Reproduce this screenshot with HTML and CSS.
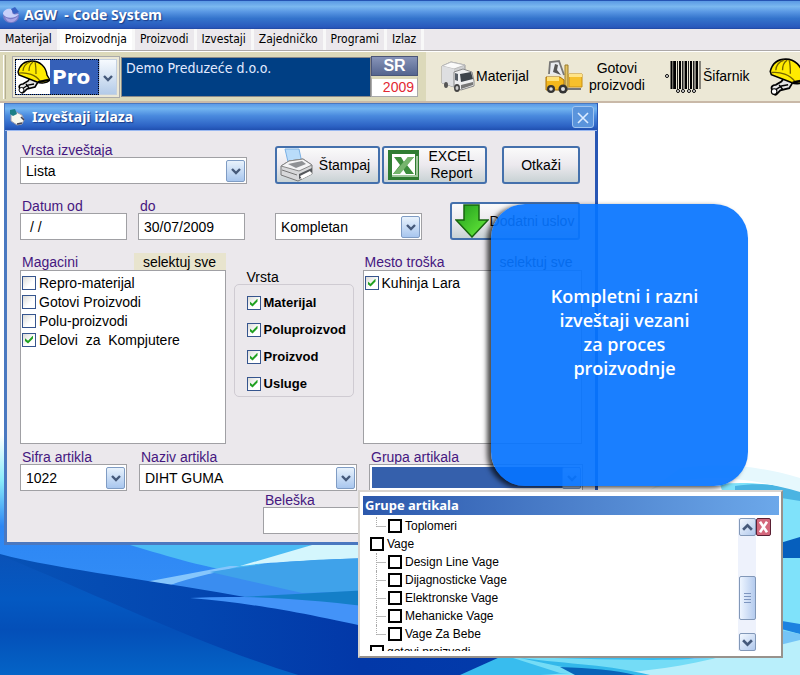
FILE: index.html
```html
<!DOCTYPE html>
<html lang="sr">
<head>
<meta charset="utf-8">
<title>AGW - Code System</title>
<link rel="stylesheet" href="styles.css">
</head>
<body>
<svg class="defs" aria-hidden="true">
  <defs>
    <linearGradient id="sky" x1="0" y1="0" x2="0" y2="1"><stop offset="0" stop-color="#fff"/><stop offset=".58" stop-color="#fff"/><stop offset=".66" stop-color="#8aecfa"/><stop offset=".74" stop-color="#2c86f4"/><stop offset=".85" stop-color="#338df6"/><stop offset="1" stop-color="#2a86f0"/></linearGradient>
    <linearGradient id="sea" x1="0" y1="0" x2="0" y2="1"><stop offset="0" stop-color="#0a52b8"/><stop offset=".35" stop-color="#0459c2"/><stop offset=".6" stop-color="#044fb8"/><stop offset="1" stop-color="#0466c8"/></linearGradient>
    <linearGradient id="deep" x1="0" y1="0" x2="1" y2="0"><stop offset="0" stop-color="#0752b6"/><stop offset=".25" stop-color="#0346b0"/><stop offset=".45" stop-color="#0238a8"/><stop offset="1" stop-color="#0340b0"/></linearGradient>
    <linearGradient id="green" x1="0" y1="0" x2="1" y2="1"><stop offset="0" stop-color="#1f9a1c"/><stop offset="1" stop-color="#6bf03c"/></linearGradient>
    <symbol id="helmet" viewBox="0 0 34 34">
      <path d="M4 29c-2-3 0-5 3-5l5-3 3-4 7 5-3 5-8 2-3 3c-2 2-4 0-4-3z" fill="#e4e4e4" stroke="#000" stroke-width="1.6"/>
      <path d="M6 29l6-4 6-1M10 24l3 4" fill="none" stroke="#000" stroke-width="1.3"/>
      <circle cx="5.500" cy="30" r="2.500" fill="#fff" stroke="#000"/>
      <path d="M2 12C4 4 10 1 16 1c8 0 14 6 15 14l3 5c-3 3-9 4-13 2L3 15z" fill="#ffeb00" stroke="#000" stroke-width="1.4"/>
      <path d="M3 13c8-1 17 2 21 8l9-2M7 11c0-4 3-8 7-9M13 11c0-4 1-7 4-9M20 14c0-5 0-8-1-12" fill="none" stroke="#766500" stroke-width="1.2"/>
      <path d="M22 22l11-2" stroke="#000" stroke-width="2"/>
    </symbol>
    <symbol id="chev" viewBox="0 0 10 8"><path d="M1 2l4 4 4-4" fill="none" stroke="#45597a" stroke-width="2.400"/></symbol>
  </defs>
</svg>

<header class="titlebar">
  <svg class="appicon" viewBox="0 0 18 18"><ellipse cx="9" cy="10" rx="8" ry="7" fill="#7a7cc8"/><path d="M1 8c0-4 5-6 8-5 2 1 0 3 2 5 2 1 4 0 6 0-3 4-12 6-16 0z" fill="#c8d0fa"/><path d="M3 11c3 3 9 3 13-1-1 4-4 6-7 6s-5-2-6-5z" fill="#a9a4e4"/><path d="M9 3l4-2 4 5-5 2z" fill="#3862c4"/></svg>
  <h1>AGW&nbsp; - Code System</h1>
</header>

<nav class="menubar">
  <a href="#">Materijal</a><a href="#" class="lit">Proizvodnja</a><a href="#">Proizvodi</a><a href="#">Izvestaji</a><a href="#">Zajedničko</a><a href="#">Programi</a><a href="#">Izlaz</a>
</nav>

<div class="toolbar">
  <div class="company">
    <span class="grip"></span>
    <div class="module">
      <button class="pro"><svg><use href="#helmet"/></svg><span>Pro</span></button>
      <button class="drop" aria-label="Modul"><svg><use href="#chev"/></svg></button>
    </div>
    <div class="firm">Demo Preduzeće d.o.o.</div>
    <div class="lang"><button>SR</button><output>2009</output></div>
  </div>
  <button class="tool truck">
    <svg viewBox="0 0 36 32"><path d="M2 5l9-4 14 3v18l-11 4L2 22z" fill="#cfd0d2" stroke="#999"/><path d="M2 5l9-4 14 3-11 4z" fill="#fafafa" stroke="#bbb"/><path d="M2 5l12 3v18L2 22z" fill="#dedfe1"/><path d="M14 11l9-3 9 3 2 9v5l-13 4-7-3z" fill="#eeeff0" stroke="#888"/><path d="M20 13l11-2 2 7-12 3z" fill="#3c434a"/><path d="M15 12l3 1v7l-3-1z" fill="#565d66"/><path d="M21 24l12-3v3l-12 4z" fill="#777"/><ellipse cx="17" cy="27" rx="3" ry="4" fill="#444"/><ellipse cx="17" cy="27" rx="1.500" ry="2" fill="#ccc"/><ellipse cx="6" cy="24" rx="2" ry="3" fill="#555"/></svg>
    <span>Materijal</span></button>
  <button class="tool fork">
    <svg viewBox="0 0 38 34"><path d="M4 14L5 2l9-1 5 14" fill="#e9ebef" stroke="#777" stroke-width="1.800"/><path d="M8 12l2-8 3 1-1 5 4 5" fill="#555"/><path d="M1 17h14l4 3v10H1z" fill="#f4b81c" stroke="#a87008"/><path d="M2 17h12v4H2z" fill="#ffe27a"/><path d="M20 5h3v25h-3z" fill="#e4c464" stroke="#9b7a28"/><path d="M24 14h13v13H24z" fill="#f6c02c" stroke="#c88e10"/><path d="M24 14h13v3H24z" fill="#ffe488"/><path d="M21 29h15" stroke="#777" stroke-width="2"/><circle cx="6" cy="29" r="4" fill="#333"/><circle cx="6" cy="29" r="1.800" fill="#ddd"/><circle cx="18" cy="29" r="4.500" fill="#333"/><circle cx="18" cy="29" r="2" fill="#ddd"/></svg>
    <span>Gotovi<br>proizvodi</span></button>
  <button class="tool code">
    <svg viewBox="0 0 38 34"><path d="M6.500 1v28M10 1v28M15 1v28M21 1v28M26 1v28M32 1v28" stroke="#000" stroke-width="2"/><path d="M8.500 1v28M12.500 1v28M17.500 1v28M19 1v28M23.500 1v28M28.500 1v28M30 1v28M35 1v28" stroke="#222"/><g fill="#fff" stroke="#000"><circle cx="2" cy="16" r="1.500"/><circle cx="13" cy="31" r="1.500"/><circle cx="18" cy="31" r="1.500"/><circle cx="24" cy="31" r="1.500"/><circle cx="29" cy="31" r="1.500"/></g></svg>
    <span>Šifarnik</span></button>
  <button class="tool hat" aria-label="Proizvodnja"><svg><use href="#helmet"/></svg></button>
</div>

<main class="desktop">
  <svg class="wallpaper" viewBox="0 103 800 572" preserveAspectRatio="none" aria-hidden="true">
    <rect y="103" width="800" height="572" fill="url(#sky)"/>
    <path d="M500 103h300v572H330V500z" fill="#fff"/>
    <path d="M120 540h480v120H340L270 585z" fill="#3a9cf2"/>
    <path d="M130 545C170 557 210 569 240 572L312 545z" fill="#4bbcf4"/>
    <path d="M240 566L312 545h60v14C310 560 270 562 240 566z" fill="#d4f6fd"/>
    <path d="M145 582L230 566h10L168 586z" fill="#86c6fc"/>
    <path d="M168 586C220 566 300 560 372 558v36c-60 0-90 3-130 3z" fill="#3a8df0"/>
    <path d="M210 572C280 560 330 559 372 558v33l-70 2z" fill="#3fa2ea"/>
    <path d="M240 597l130-7v18z" fill="#147fc8"/>
    <path d="M0 554C90 578 280 592 400 635L800 690H0z" fill="url(#deep)"/>
    <path d="M190 598C260 594 330 602 380 608v22C300 612 250 603 190 598z" fill="#4393f8"/>
    <path d="M0 555C100 596 210 650 315 680H0z" fill="url(#sea)"/>
    <path d="M720 484c30-3 60 1 80 7v184H500v-25h270z" fill="#7fe2fa"/>
    <path d="M735 486c25-4 45-1 65 5v10c-30-5-50-8-65-8z" fill="#4bb4e2"/>
    <path d="M650 490C700 470 750 478 800 492v-14c-40-12-80-16-120-10z" fill="#e6f8fd"/>
    <path d="M770 546l30-9v21h-30z" fill="#065fbd"/>
    <path d="M770 619l30 5v10l-30-8z" fill="#1c82e0"/>
    <path d="M770 628l30 6v14l-60 12h-70z" fill="#75c4f6"/>
    <path d="M800 640c-70 18-130 25-200 35h200z" fill="#b9effb"/>
    <path d="M500 657h200c-70 12-110 15-160 18h-80z" fill="#38bcee"/>
    <path d="M510 657c70 1 160 6 210 0-50 12-90 18-160 16z" fill="#74dcf6"/>
    <path d="M520 658c50 6 90 7 130 17H600z" fill="#33b8ea"/>
    <path d="M560 667c30 1 55 3 75 8h-60z" fill="#0863b8"/>
  </svg>

  <section class="dialog">
    <header class="dialog-head">
      <svg class="bell" viewBox="0 0 18 18"><path d="M3 6l5-2 6 3 2 5-2 4-5 1-6-4z" fill="#f8f8ee" stroke="#99a"/><path d="M2 2l5-1 2 5-4 2-3-2z" fill="#1b7f86"/><path d="M13 9l3 3M9 16l5-1" stroke="#445" stroke-width="1.500"/></svg>
      <h2>Izveštaji izlaza</h2>
      <button class="close" aria-label="Zatvori"><svg viewBox="0 0 12 12"><path d="M1 1l10 10M11 1L1 11" stroke="#dcebff" stroke-width="1.600"/></svg></button>
    </header>
    <form class="form">
      <div class="row top">
        <div class="field wide"><label for="kind">Vrsta izveštaja</label>
          <span class="combo"><select id="kind"><option>Lista</option></select><i><svg><use href="#chev"/></svg></i></span></div>
        <div class="buttons">
          <button type="button" class="btn"><svg viewBox="0 0 34 34"><path d="M5 1h14l3 14-13 3z" fill="#b9dcfa" stroke="#7ab0e4"/><path d="M1 18l8-5 14-2 9 6v9l-14 7-17-6z" fill="#d7d8da" stroke="#777"/><path d="M1 18l8-5 14-2 9 6-13 6z" fill="#f4f4f5" stroke="#888"/><path d="M8 16l14-3 4 3-10 4z" fill="#8f9194"/><path d="M19 26l13-6v4l-13 7z" fill="#55585c"/><path d="M20 28l10-5 2 3-10 5z" fill="#fff"/><path d="M2 22l15 5" stroke="#777"/></svg><span>Štampaj</span></button>
          <button type="button" class="btn"><svg viewBox="0 0 34 34"><path d="M1 2h31v30H1z" fill="#2f7c32"/><path d="M5 6h23v22H5z" fill="#fff"/><path d="M5 28h25V8" fill="none" stroke="#9fc79c" stroke-width="2"/><path d="M7 9h7l3 5 4-5h6l-7 8 7 9h-8l-3-5-4 5H6l7-9z" fill="#3c8d3c"/><path d="M21 9h6L13 26H6z" fill="#76b56d"/></svg><span>EXCEL<br>Report</span></button>
          <button type="button" class="btn plain"><span>Otkaži</span></button>
        </div>
      </div>

      <div class="row second">
        <div class="field small"><label for="from">Datum od</label><input id="from" value=" / /"></div>
        <div class="field small"><label for="to">do</label><input id="to" value="30/07/2009"></div>
        <span class="combo medium"><select aria-label="Obim"><option>Kompletan</option></select><i><svg><use href="#chev"/></svg></i></span>
        <button type="button" class="btn extra"><svg viewBox="0 0 34 34"><path d="M9 1h15v15h9L17 33 1 16h8z" fill="url(#green)" stroke="#17640f" stroke-width="1.500"/></svg><span>Dodatni uslov</span></button>
      </div>

      <div class="row lists">
        <div class="listcol">
          <div class="listhead"><span>Magacini</span><button type="button">selektuj sve</button></div>
          <div class="list">
            <label><input type="checkbox">Repro-materijal</label>
            <label><input type="checkbox">Gotovi Proizvodi</label>
            <label><input type="checkbox">Polu-proizvodi</label>
            <label><input type="checkbox" checked>Delovi&nbsp; za&nbsp; Kompjutere</label>
          </div>
        </div>
        <div class="group" role="group" aria-labelledby="grp">
          <span id="grp">Vrsta</span>
          <div class="groupbox">
            <label><input type="checkbox" checked>Materijal</label>
            <label><input type="checkbox" checked>Poluproizvod</label>
            <label><input type="checkbox" checked>Proizvod</label>
            <label><input type="checkbox" checked>Usluge</label>
          </div>
        </div>
        <div class="listcol grow">
          <div class="listhead"><span>Mesto troška</span><button type="button">selektuj sve</button></div>
          <div class="list"><label><input type="checkbox" checked>Kuhinja Lara</label></div>
        </div>
      </div>

      <div class="row articles">
        <div class="field small"><label for="code">Sifra artikla</label><span class="combo"><select id="code"><option>1022</option></select><i><svg><use href="#chev"/></svg></i></span></div>
        <div class="field name"><label for="name">Naziv artikla</label><span class="combo"><select id="name"><option>DIHT GUMA</option></select><i><svg><use href="#chev"/></svg></i></span></div>
        <div class="field rest"><label for="group">Grupa artikala</label><span class="combo picked"><select id="group"><option></option></select><i><svg><use href="#chev"/></svg></i></span></div>
      </div>
      <div class="row note"><div class="field"><label for="note">Beleška</label><input id="note"></div></div>
    </form>
  </section>

  <aside class="callout">Kompletni i razni<br>izveštaji vezani<br>za proces<br>proizvodnje</aside>

  <section class="popup">
    <h2>Grupe artikala</h2>
    <div class="popup-body">
      <div class="tree">
        <label class="leaf end"><input type="checkbox">Toplomeri</label>
        <label><input type="checkbox">Vage</label>
        <label class="leaf"><input type="checkbox">Design Line Vage</label>
        <label class="leaf"><input type="checkbox">Dijagnosticke Vage</label>
        <label class="leaf"><input type="checkbox">Elektronske Vage</label>
        <label class="leaf"><input type="checkbox">Mehanicke Vage</label>
        <label class="leaf end"><input type="checkbox">Vage Za Bebe</label>
        <label><input type="checkbox">gotovi proizvodi</label>
      </div>
      <div class="scroll">
        <button aria-label="Gore"><svg class="up"><use href="#chev"/></svg></button>
        <span class="thumb"></span>
        <button aria-label="Dole"><svg><use href="#chev"/></svg></button>
      </div>
      <button class="x" aria-label="Zatvori grupe"><svg viewBox="0 0 12 16"><path d="M2 2l8 12M10 2L2 14" stroke="#fff" stroke-width="3"/></svg></button>
    </div>
  </section>
</main>
</body>
</html>
```
FILE: styles.css
```css
* { box-sizing: border-box; }
body { margin: 0; min-height: 100vh; display: flex; flex-direction: column; overflow: hidden; background: #fff; color: #000; font: 14px/16px "Liberation Sans", Arial, sans-serif; }
button, input, select { font: inherit; color: inherit; margin: 0; border-radius: 0; }
button { padding: 0; border: 0; background: none; }
h1, h2 { margin: 0; font: bold 14px/20px "Noto Sans", "Trebuchet MS", sans-serif; color: #fff; }
.defs { position: absolute; width: 0; height: 0; }

.titlebar { height: 29px; padding: 0 2px; display: flex; align-items: center; gap: 4px; border-top: 1px solid #2554b4; background: linear-gradient(#5a9ae4, #7ab8f0 20%, #5a98e4 38%, #3474cc 62%, #2858bc 94%, #2048a0); }
.titlebar h1, .dialog-head h2 { text-shadow: 1px 1px 1px #1c3c88; }
.appicon { width: 18px; height: 18px; }

.menubar { display: flex; height: 22px; background: #ebe8ec; border-bottom: 1px solid #aca8a8; font: 12px/20px "DejaVu Sans Condensed", Tahoma, sans-serif; }
.menubar a { color: #000; text-decoration: none; padding: 0 5px; border-right: 3px solid #f8f8f8; white-space: nowrap; }
.menubar .lit { background: #fff; }

.toolbar { display: flex; align-items: center; height: 52px; background: #ece8d6; border-top: 1px solid #fff; border-bottom: 2px solid #c9b9a8; overflow: hidden; }
.company { flex: none; display: flex; align-items: center; height: 49px; width: 426px; padding: 0 8px 0 3px; background: #dcd9ba; }
.grip { width: 3px; height: 44px; margin-right: 6px; border-left: 1px solid #fff; border-right: 1px solid #b4ae92; }
.module { display: flex; height: 42px; width: 108px; padding: 2px; background: #ece8d6; border: 1px solid #aaa; }
.pro { flex: 1; display: flex; align-items: center; gap: 2px; background: #3560b8; border: 1px dotted #000; font: bold 20px/24px "DejaVu Sans", Verdana, sans-serif; color: #fff; }
.pro svg { width: 34px; height: 34px; background: #fff; }
.drop { width: 18px; background: linear-gradient(#f6fafe, #b4cbe8); border: 1px solid #c4d0e0; }
.drop svg { width: 10px; height: 8px; }
.firm { flex: 1; height: 40px; margin-left: 1px; padding: 2px 4px; background: #003f84; border: 1px solid #8a8a8a; color: #e2eaff; font: 14px/17px "DejaVu Sans Condensed", Tahoma, sans-serif; }
.lang { display: flex; flex-direction: column; width: 47px; height: 41px; }
.lang button { flex: 1; background: linear-gradient(#8794b8, #55658f); border: 1px solid #4a5578; color: #fff; font: bold 16px/16px "Liberation Sans", sans-serif; }
.lang output { height: 21px; background: #fff; border: 1px solid #aaa; border-top: 3px solid #dcd9ba; text-align: right; padding-right: 3px; font-size: 14px; color: #e22832; }
.tool { flex: none; display: flex; align-items: center; font-size: 14px; line-height: 17px; }
.tool svg { flex: none; }
.truck { margin-left: 14px; }
.truck svg { width: 36px; height: 32px; }
.fork { gap: 6px; margin-left: 16px; }
.fork svg, .code svg { width: 38px; height: 34px; }
.code { margin-left: 20px; }
.hat { margin-left: 18px; }
.hat svg { width: 38px; height: 38px; }

.desktop { flex: 1; position: relative; }
.wallpaper { position: absolute; inset: 0; width: 100%; height: 100%; }

.dialog { position: absolute; left: 4px; top: 0; width: 594px; border: 3px solid #4a78c0; border-top-width: 1px; border-right-color: #2856b4; background: #ebe8ec; }
.dialog-head { display: flex; align-items: center; gap: 6px; height: 27px; margin: 0 -2px; padding: 0 3px; background: linear-gradient(#5c9ae6, #72b4f0 18%, #4a8ade 45%, #2c62c4 85%, #2050b0); border-bottom: 1px solid #9ab8f0; }
.dialog-head h2 { flex: 1; }
.bell { width: 18px; height: 18px; }
.close { width: 22px; height: 22px; border: 1px solid #a0c4f0; border-radius: 3px; background: #5a94dc; }
.close svg { width: 12px; height: 12px; vertical-align: middle; }

.form { padding: 12px 13px 8px; }
.row { display: flex; align-items: flex-end; }
.field { flex: none; display: flex; flex-direction: column; color: #451780; line-height: 14px; }
.field label { padding-left: 2px; }
.wide { width: 227px; }
.small { width: 107px; }
.name { width: 218px; }
.rest { width: 214px; }
.second { margin-top: 15px; }
.lists { margin-top: 14px; align-items: flex-start; }
.articles { margin-top: 6px; gap: 12px; }
.note { margin: 2px 0 0 243px; }
.note .field { flex: 1; }
.field input, .combo select { width: 100%; height: 27px; padding: 0 5px; background: #fff; border: 1px solid #a0a0a4; color: #000; outline: 0; }
.combo { display: grid; }
.combo > * { grid-area: 1 / 1; }
.combo select { appearance: none; }
.combo i { justify-self: end; align-self: center; width: 19px; height: 22px; margin-right: 2px; display: grid; place-items: center; pointer-events: none; border: 1px solid #7f9cc4; border-radius: 2px; background: linear-gradient(#e8f2fc, #a8c6ee); }
.combo i svg { width: 10px; height: 8px; }
.combo.medium { width: 147px; margin: 0 28px 0 30px; }
.picked select { background: #3560ac; border: 1px solid #a0a0a4; outline: 2px solid #fff; outline-offset: -3px; }
.second .small + .small { margin-left: 11px; }

.buttons { display: flex; gap: 2px; margin-left: 28px; }
.btn { display: flex; align-items: center; width: 105px; height: 38px; padding: 0 3px; border: 2px solid #4470ac; border-radius: 3px; background: linear-gradient(#fafafa, #ece9ee 50%, #c8d2d4); line-height: 17px; }
.btn svg { flex: none; width: 34px; height: 34px; }
.btn span { flex: 1; text-align: center; white-space: nowrap; }
.plain { width: 78px; margin-left: 13px; }
.extra { width: 130px; }

.listcol { width: 206px; }
.listcol.grow { width: 220px; }
.listhead { display: flex; justify-content: space-between; align-items: flex-end; height: 16px; padding-left: 2px; color: #451780; }
.listhead button { width: 92px; height: 17px; background: #e8e4ce; color: #000; }
.grow .listhead button { background: none; }
.list { height: 174px; padding: 2px 1px; background: #fff; border: 1px solid #a0a0a4; }
.list label { display: flex; align-items: center; gap: 3px; height: 19px; }
input[type="checkbox"] { appearance: none; flex: none; display: grid; place-items: center; width: 14px; height: 14px; border: 1px solid #36558e; background: linear-gradient(135deg, #dcdcd8, #fff 60%); }
input[type="checkbox"]:checked::before { content: ""; width: 8px; height: 8px; background: #21a121; clip-path: polygon(0 35%, 38% 65%, 100% 0, 100% 38%, 38% 100%, 0 70%); }
.group { width: 120px; margin: 16px 9px 0 8px; }
.group > span { display: block; padding-left: 13px; line-height: 15px; }
.groupbox { height: 113px; margin-top: -1px; padding: 4px 12px; border: 1px solid #cfcbd2; border-radius: 5px; font-size: 13px; }
.groupbox label { display: flex; align-items: center; gap: 3px; height: 27px; font-weight: bold; }

.callout { position: absolute; left: 491px; top: 101px; width: 257px; height: 282px; padding-top: 80px; padding-left: 10px; border-radius: 34px; background: rgba(6, 116, 255, .92); box-shadow: -4px 2px 5px rgba(0, 0, 0, .7); color: #fff; text-align: center; font: 600 18px/24px "Open Sans", sans-serif; }

.popup { position: absolute; left: 358px; top: 387px; width: 425px; height: 168px; padding: 4px 2px 6px 3px; background: #fff; border: 2px solid #d8d4d0; border-right-color: #98928c; border-bottom-color: #98928c; }
.popup h2 { height: 19px; padding-left: 2px; background: linear-gradient(90deg, #2c58ac, #6ca8ea); font-size: 13px; line-height: 19px; }
.popup-body { display: flex; align-items: flex-start; height: 136px; }
.tree { flex: 1; height: 136px; padding: 2px 0 0 7px; overflow: hidden; font-size: 12px; }
.tree label { display: flex; align-items: center; gap: 3px; height: 18px; }
.tree input[type="checkbox"] { border: 2px solid #000; background: #fff; }
.tree .leaf::before { content: ""; align-self: flex-start; width: 9px; height: 18px; margin: 0 2px 0 6px; background: linear-gradient(#bbb, #bbb) 0 9px / 9px 1px no-repeat; border-left: 1px dotted #aaa; }
.tree .leaf { gap: 0; }
.tree .leaf input { margin-right: 3px; }
.tree .end::before { height: 10px; }
.scroll { display: flex; flex-direction: column; align-items: center; width: 18px; height: 133px; margin-top: 3px; background: #eef2fc; }
.scroll button, .thumb { width: 17px; height: 18px; border: 1px solid #8298b8; border-radius: 2px; background: linear-gradient(135deg, #f4f9ff, #b0c8ec); }
.scroll button svg { display: block; width: 11px; height: 9px; margin: auto; }
.scroll .up { transform: rotate(180deg); }
.scroll .thumb { height: 44px; margin: auto 0 13px; background: repeating-linear-gradient(#7e96c0 0 1px, transparent 1px 3px) center / 7px 10px no-repeat, linear-gradient(90deg, #eef5ff, #b4cbee); }
.x { width: 15px; height: 18px; margin: 3px 8px 0 0; border: 1px solid #5a2034; border-radius: 2px; background: #d4687c; }
.x svg { display: block; width: 11px; height: 14px; margin: auto; }
```
